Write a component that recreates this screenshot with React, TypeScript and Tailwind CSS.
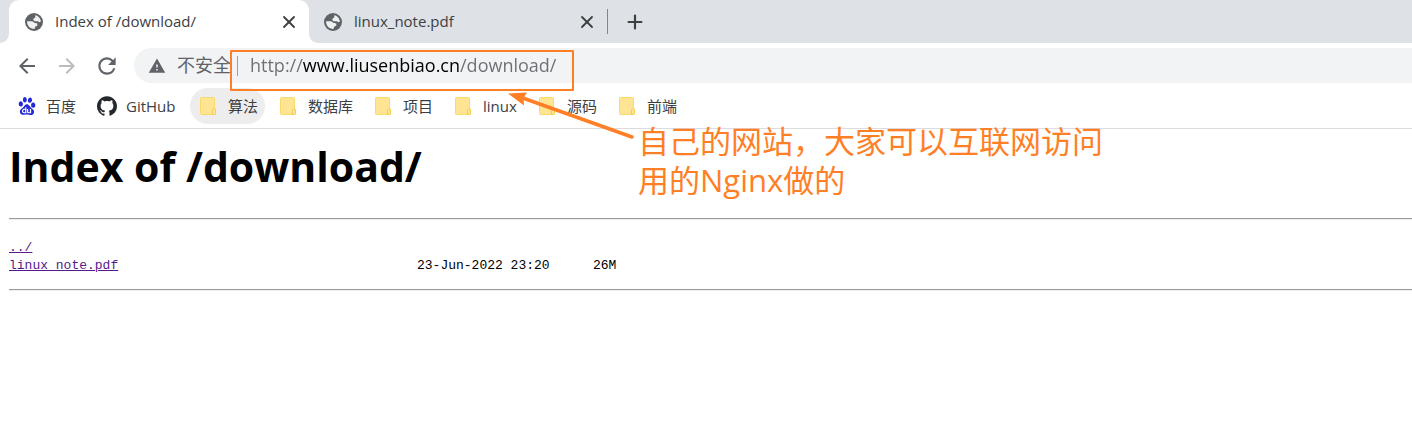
import { useState } from 'react';
import { Plus, X } from 'lucide-react';
import { MdArrowBack, MdArrowForward, MdRefresh, MdWarning } from 'react-icons/md';
import { SiBaidu, SiGithub } from 'react-icons/si';

function GlobeIcon() {
  return (
    <svg viewBox="0 0 18 18" className="size-[18px] shrink-0" aria-hidden="true">
      <circle cx="9" cy="9" r="9" fill="#5f6368" />
      <path d="M10.3 2.2C13.3 2.8 15.7 5.4 15.9 8.6L14.6 9.2 12.8 8.2H9.8L8.2 7 8.6 5.4 10.2 4.8Z" fill="#fff" fillOpacity=".9" />
      <path d="M2.1 8.2H6.6C8.4 8.2 8.6 9.8 10.2 10L12.4 10.6 12.2 12.8 10.4 13.6 9.4 15.9C5.2 16 1.8 12.6 2.1 8.2Z" fill="#fff" fillOpacity=".9" />
    </svg>
  );
}

function FolderIcon() {
  return (
    <svg viewBox="0 0 16 18" className="h-[18px] w-4 shrink-0" aria-hidden="true">
      <path d="M1.5.5h12a1 1 0 0 1 1 1v10.2l.9.9v4a.9.9 0 0 1-.9.9h-13a1 1 0 0 1-1-1v-15a1 1 0 0 1 1-1Z" fill="#ffe593" stroke="#fbd968" />
      <path d="M12.5 17.3v-3.8q0-1.8 1.5-1.8t1.5 1.8v3q0 1-1 1h-2Z" fill="#ffe593" stroke="#f3c93f" strokeWidth=".8" />
    </svg>
  );
}

const folders = ['算法', '数据库', '项目', 'linux', '源码', '前端'];

function Bookmark({ label, active }: { label: string; active?: boolean }) {
  return (
    <a
      href="#"
      className={
        active
          ? 'flex h-9 items-center gap-3 rounded-full bg-[#ededed] pr-[7px] pl-[10px]'
          : 'flex h-9 items-center gap-3 rounded-full pr-[7px] pl-[10px]'
      }
    >
      <FolderIcon />
      {label}
    </a>
  );
}

export default function App() {
  const [url, setUrl] = useState('http://www.liusenbiao.cn/download/');
  return (
    <div className="relative min-h-screen overflow-x-clip bg-white font-['Open_Sans','Noto_Sans_CJK_SC',sans-serif] text-[#3c4043]">
      <header>
        <div className="flex h-[43px] bg-white text-[15px]">
          <div className="w-[9px] rounded-br-[9px] bg-[#dee1e6]" />
          <div className="w-[300px] bg-[linear-gradient(#dee1e6_50%,white_50%)]">
            <div className="flex h-full items-center rounded-t-[10px] bg-white pr-[10px] pl-4">
              <GlobeIcon />
              <span className="ml-3 flex-1">Index of /download/</span>
              <button aria-label="Close Index of /download/">
                <X className="size-5" strokeWidth={2.2} />
              </button>
            </div>
          </div>
          <div className="flex flex-1 items-center rounded-bl-[9px] bg-[#dee1e6]">
            <div className="flex w-[298px] items-center pr-[10px] pl-[15px]">
              <GlobeIcon />
              <span className="ml-3 flex-1">linux_note.pdf</span>
              <button aria-label="Close linux_note.pdf">
                <X className="size-5" strokeWidth={2.2} />
              </button>
            </div>
            <div className="h-[25px] w-px bg-[#80868b]" />
            <button aria-label="New tab" className="ml-4">
              <Plus className="size-[22px]" strokeWidth={2.4} />
            </button>
          </div>
        </div>

        <div className="flex items-center py-[5px] pl-[15px]">
          <button aria-label="Back" className="text-[#5f6368]">
            <MdArrowBack className="size-6" />
          </button>
          <button aria-label="Forward" className="ml-4 text-[#babcbe]">
            <MdArrowForward className="size-6" />
          </button>
          <button aria-label="Reload" className="ml-[15px] text-[#5f6368]">
            <MdRefresh className="size-[26px]" />
          </button>
          <div className="ml-[14px] flex h-[35px] flex-1 items-center rounded-l-full bg-[#f1f3f4] pl-[14px] text-[18px] text-[#5f6368]">
            <MdWarning className="size-[18px]" />
            <label htmlFor="address" className="ml-[11px]">不安全</label>
            <span className="mr-3 ml-[6px] h-5 w-px bg-[#9aa0a6]" />
            <input
              id="address"
              value={url}
              onChange={(e) => setUrl(e.target.value)}
              className="min-w-0 flex-1 bg-[linear-gradient(90deg,#6b6f73_53px,#000_53px,#000_209px,#6b6f73_209px)] bg-clip-text text-transparent caret-black outline-none"
            />
          </div>
        </div>

        <nav className="flex h-[41px] items-start border-b border-[#dadce0] pl-[10px] text-[15px]">
          <a href="#" className="flex h-9 w-[79px] items-center gap-[10px] pl-2">
            <SiBaidu className="size-[18px] text-[#2529d8]" />
            百度
          </a>
          <a href="#" className="flex h-9 w-[101px] items-center gap-[9px] pl-2">
            <SiGithub className="size-5 text-[#24292e]" />
            GitHub
          </a>
          <div className="flex gap-[5px]">
            {folders.map((f) => (
              <Bookmark key={f} label={f} active={f === '算法'} />
            ))}
          </div>
        </nav>
      </header>

      <main className="pl-[9px] text-black">
        <h1 className="h-[89px] pt-2 font-['Open_Sans',sans-serif] text-[41px] leading-[58px] font-bold">Index of /download/</h1>
        <hr className="border-t border-b border-t-[#9a9a9a] border-b-[#eeeeee]" />
        <table className="mt-[19px] mb-[14px] font-['Liberation_Mono',monospace] text-[13px] leading-[18px]">
          <tbody>
            <tr>
              <td className="w-[408px] p-0">
                <a href="#" className="text-[#551a8b] underline">../</a>
              </td>
              <td className="w-[176px] p-0" />
              <td className="p-0" />
            </tr>
            <tr>
              <td className="p-0">
                <a href="#" className="text-[#551a8b] underline">linux_note.pdf</a>
              </td>
              <td className="p-0">23-Jun-2022 23:20</td>
              <td className="p-0">26M</td>
            </tr>
          </tbody>
        </table>
        <hr className="border-t border-b border-t-[#9a9a9a] border-b-[#eeeeee]" />
      </main>

      <div className="pointer-events-none absolute top-[50px] left-[230px] h-[41px] w-[344px] rounded-[1px] border-2 border-[#ff7f27]" />
      <svg viewBox="0 0 130 50" className="pointer-events-none absolute top-[90px] left-[506px] h-[50px] w-[130px]" aria-hidden="true">
        <path d="M14 7 126 47" stroke="#ff7f27" strokeWidth="3.5" strokeLinecap="round" />
        <path d="M2 3.5 21 2.5 17.5 8 18 15.5Z" fill="#ff7f27" />
      </svg>
      <p className="absolute top-[122px] left-[638px] text-[31px] leading-[39px] font-normal text-[#ff7f27]">
        自己的网站，大家可以互联网访问
        <br />
        用的Nginx做的
      </p>
    </div>
  );
}
